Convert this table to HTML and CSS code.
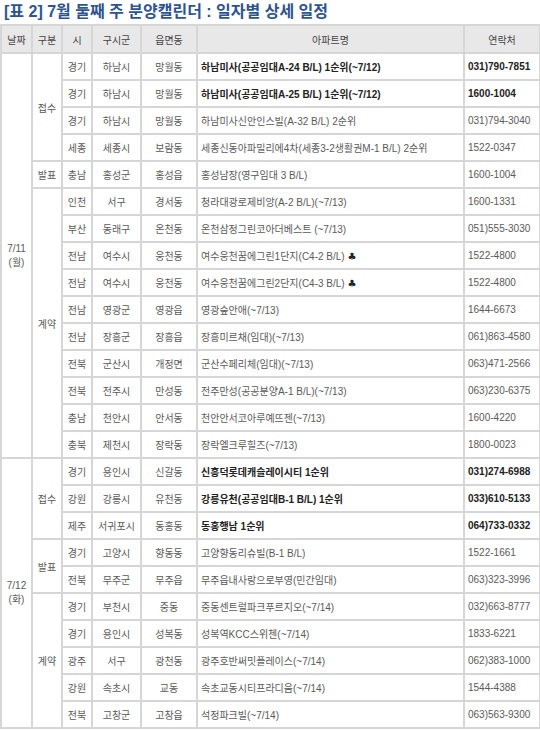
FILE: index.html
```html
<!DOCTYPE html>
<html lang="ko">
<head>
<meta charset="utf-8">
<link rel="stylesheet" href="styles.css">
</head>
<body>
<div class="title">[표 2] 7월 둘째 주 분양캘린더 : 일자별 상세 일정</div>
<table class="cal">
  <colgroup>
    <col class="c-date"><col class="c-type"><col class="c-si"><col class="c-gu"><col class="c-dong"><col class="c-apt"><col class="c-tel">
  </colgroup>
  <thead>
    <tr><th>날짜</th><th>구분</th><th>시</th><th>구시군</th><th>읍면동</th><th>아파트명</th><th>연락처</th></tr>
  </thead>
  <tbody>
    <tr class="b"><td class="date" rowspan="15">7/11<br>(월)</td><td class="type" rowspan="4">접수</td><td>경기</td><td>하남시</td><td>망월동</td><td class="apt">하남미사(공공임대A-24 B/L) 1순위(~7/12)</td><td class="tel">031)790-7851</td></tr>
    <tr class="b"><td>경기</td><td>하남시</td><td>망월동</td><td class="apt">하남미사(공공임대A-25 B/L) 1순위(~7/12)</td><td class="tel">1600-1004</td></tr>
    <tr><td>경기</td><td>하남시</td><td>망월동</td><td class="apt">하남미사신안인스빌(A-32 B/L) 2순위</td><td class="tel">031)794-3040</td></tr>
    <tr><td>세종</td><td>세종시</td><td>보람동</td><td class="apt">세종신동아파밀리에4차(세종3-2생활권M-1 B/L) 2순위</td><td class="tel">1522-0347</td></tr>
    <tr><td class="type">발표</td><td>충남</td><td>홍성군</td><td>홍성읍</td><td class="apt">홍성남장(영구임대 3 B/L)</td><td class="tel">1600-1004</td></tr>
    <tr><td class="type" rowspan="10">계약</td><td>인천</td><td>서구</td><td>경서동</td><td class="apt">청라대광로제비앙(A-2 B/L)(~7/13)</td><td class="tel">1600-1331</td></tr>
    <tr><td>부산</td><td>동래구</td><td>온천동</td><td class="apt">온천삼정그린코아더베스트 (~7/13)</td><td class="tel">051)555-3030</td></tr>
    <tr><td>전남</td><td>여수시</td><td>웅천동</td><td class="apt">여수웅천꿈에그린1단지(C4-2 B/L) <span class="club">♣</span></td><td class="tel">1522-4800</td></tr>
    <tr><td>전남</td><td>여수시</td><td>웅천동</td><td class="apt">여수웅천꿈에그린2단지(C4-3 B/L) <span class="club">♣</span></td><td class="tel">1522-4800</td></tr>
    <tr><td>전남</td><td>영광군</td><td>영광읍</td><td class="apt">영광숲안애(~7/13)</td><td class="tel">1644-6673</td></tr>
    <tr><td>전남</td><td>장흥군</td><td>장흥읍</td><td class="apt">장흥미르채(임대)(~7/13)</td><td class="tel">061)863-4580</td></tr>
    <tr><td>전북</td><td>군산시</td><td>개정면</td><td class="apt">군산수페리체(임대)(~7/13)</td><td class="tel">063)471-2566</td></tr>
    <tr><td>전북</td><td>전주시</td><td>만성동</td><td class="apt">전주만성(공공분양A-1 B/L)(~7/13)</td><td class="tel">063)230-6375</td></tr>
    <tr><td>충남</td><td>천안시</td><td>안서동</td><td class="apt">천안안서코아루예뜨젠(~7/13)</td><td class="tel">1600-4220</td></tr>
    <tr><td>충북</td><td>제천시</td><td>장락동</td><td class="apt">장락엘크루힐즈(~7/13)</td><td class="tel">1800-0023</td></tr>

    <tr class="b"><td class="date" rowspan="10">7/12<br>(화)</td><td class="type" rowspan="3">접수</td><td>경기</td><td>용인시</td><td>신갈동</td><td class="apt">신흥덕롯데캐슬레이시티 1순위</td><td class="tel">031)274-6988</td></tr>
    <tr class="b"><td>강원</td><td>강릉시</td><td>유천동</td><td class="apt">강릉유천(공공임대B-1 B/L) 1순위</td><td class="tel">033)610-5133</td></tr>
    <tr class="b"><td>제주</td><td>서귀포시</td><td>동홍동</td><td class="apt">동홍행남 1순위</td><td class="tel">064)733-0332</td></tr>
    <tr><td class="type" rowspan="2">발표</td><td>경기</td><td>고양시</td><td>향동동</td><td class="apt">고양향동리슈빌(B-1 B/L)</td><td class="tel">1522-1661</td></tr>
    <tr><td>전북</td><td>무주군</td><td>무주읍</td><td class="apt">무주읍내사랑으로부영(민간임대)</td><td class="tel">063)323-3996</td></tr>
    <tr><td class="type" rowspan="5">계약</td><td>경기</td><td>부천시</td><td>중동</td><td class="apt">중동센트럴파크푸르지오(~7/14)</td><td class="tel">032)663-8777</td></tr>
    <tr><td>경기</td><td>용인시</td><td>성복동</td><td class="apt">성복역KCC스위첸(~7/14)</td><td class="tel">1833-6221</td></tr>
    <tr><td>광주</td><td>서구</td><td>광천동</td><td class="apt">광주호반써밋플레이스(~7/14)</td><td class="tel">062)383-1000</td></tr>
    <tr><td>강원</td><td>속초시</td><td>교동</td><td class="apt">속초교동시티프라디움(~7/14)</td><td class="tel">1544-4388</td></tr>
    <tr><td>전북</td><td>고창군</td><td>고창읍</td><td class="apt">석정파크빌(~7/14)</td><td class="tel">063)563-9300</td></tr>
  </tbody>
</table>
</body>
</html>
```

FILE: styles.css
```css
html, body {
  margin: 0;
  padding: 0;
  background: #ffffff;
}
body {
  font-family: "Liberation Sans", "Noto Sans CJK KR", sans-serif;
  color: #5a5a5a;
}
.title {
  height: 24px;
  line-height: 24px;
  padding-left: 4px;
  font-size: 16px;
  font-weight: bold;
  color: #2e5490;
}
.cal {
  border-collapse: collapse;
  table-layout: fixed;
  width: 539px;
  font-size: 10px;
}
.c-date { width: 31px; }
.c-type { width: 30px; }
.c-si { width: 30px; }
.c-gu { width: 49px; }
.c-dong { width: 56px; }
.c-apt { width: 267px; }
.c-tel { width: 76px; }
.cal th, .cal td {
  border: 2px solid #d6d6d6;
  padding: 0;
  text-align: center;
  vertical-align: middle;
  white-space: nowrap;
  overflow: hidden;
}
.cal thead tr { height: 28px; }
.cal th {
  background: #e8e8e8;
  font-weight: normal;
  color: #444444;
}
.cal tbody tr { height: 27px; }
.cal td.apt, .cal td.tel {
  text-align: left;
  padding-left: 3px;
}
.cal td.date {
  line-height: 14px;
}
.cal tr.b td.apt, .cal tr.b td.tel {
  font-weight: bold;
  color: #222222;
}
.club {
  font-family: "DejaVu Sans", sans-serif;
  color: #222222;
}
```
